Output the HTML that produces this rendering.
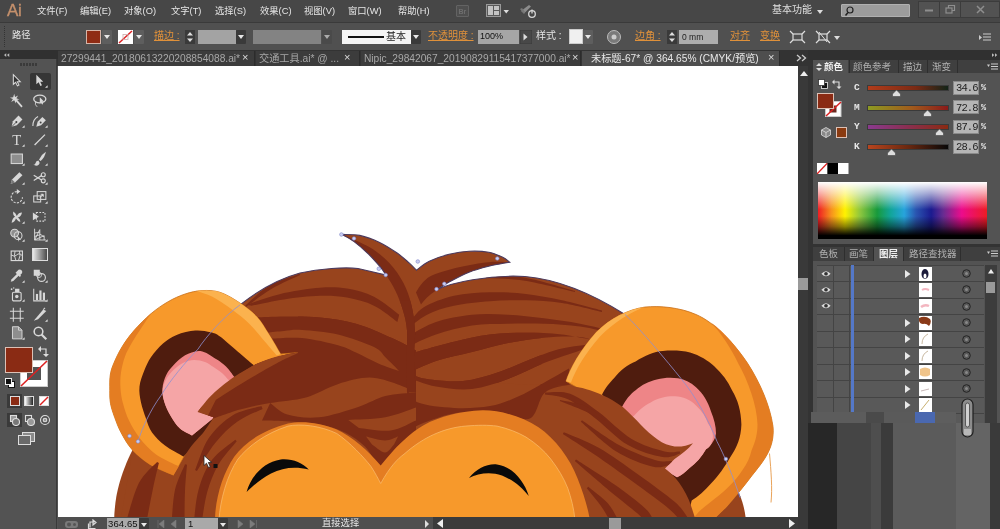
<!DOCTYPE html>
<html><head><meta charset="utf-8">
<style>
*{box-sizing:border-box;margin:0;padding:0}
html,body{width:1000px;height:529px;overflow:hidden;background:#535353}
body{position:relative;font-family:"Liberation Sans","Noto Sans CJK SC",sans-serif;font-size:11px;color:#dcdcdc}
.a{position:absolute}
#menubar,#ctrl,#tabs,#status,#rp,#tool{will-change:transform;backface-visibility:hidden}
.t{position:absolute;white-space:nowrap;line-height:1}
.o{color:#e0913a;text-decoration:underline}
#menubar{left:0;top:0;width:1000px;height:22px;background:#474747}
#ctrl{left:0;top:22px;width:1000px;height:28px;background:#505050;border-top:1px solid #3a3a3a}
#tabs{left:0;top:50px;width:1000px;height:16px;background:#333}
#tool{left:0;top:59px;width:57px;height:470px;background:#535353;border-right:1px solid #3a3a3a}
#canvas{left:58px;top:65.5px;width:739.500px;height:451.500px;background:#fff;overflow:hidden}
#status{left:58px;top:517px;width:740px;height:12px;background:#4f4f4f}
#vs{left:797.500px;top:66px;width:10.500px;height:463px;background:#393939}
#rp{left:808px;top:50px;width:192px;height:479px;background:#333}
.dd{position:absolute;width:10px;height:14px;background:#3a3a3a;border-radius:1px}
.dd:after{content:"";position:absolute;left:2px;top:5px;border:3px solid transparent;border-top:4px solid #e8e8e8}
.m{top:7px;font-size:9.3px;color:#e6e6e6}
.tb{top:1px;height:15px;background:#3c3c3c;border-right:1px solid #2c2c2c;color:#a8a8a8;font-size:10.2px;overflow:hidden}
.tb span{position:absolute;left:3px;top:2px;white-space:nowrap;line-height:12px}
.tb b{position:absolute;top:0;font-weight:normal;font-size:11px;line-height:13px;color:#ddd}
.tb.act{background:#4e4e4e;color:#e8e8e8}
</style></head><body>
<div id="menubar" class="a">
<div class="t" style="left:7px;top:2px;font-size:17px;font-weight:normal;color:#c5906c;letter-spacing:-.3px;-webkit-text-stroke:.35px #c5906c">Ai</div>
<div class="t m" style="left:37px">文件(F)</div><div class="t m" style="left:80px">编辑(E)</div><div class="t m" style="left:124px">对象(O)</div><div class="t m" style="left:171px">文字(T)</div><div class="t m" style="left:215px">选择(S)</div><div class="t m" style="left:260px">效果(C)</div><div class="t m" style="left:304px">视图(V)</div><div class="t m" style="left:348px">窗口(W)</div><div class="t m" style="left:398px">帮助(H)</div>
<div class="a" style="left:456px;top:5px;width:13px;height:12px;background:#4f4f4f;border:1px solid #636363;border-radius:1px"><div class="t" style="left:1.500px;top:2px;font-size:7px;color:#6e6e6e;font-weight:bold">Br</div></div>
<svg class="a" style="left:485px;top:3px" width="26" height="15"><rect x="1.500" y="1.500" width="14" height="12" fill="#5a5a5a" stroke="#9a9a9a" stroke-width="1"/><rect x="3" y="3" width="5" height="9" fill="#c4c4c4"/><rect x="9" y="3" width="5" height="4" fill="#c4c4c4"/><rect x="9" y="8" width="5" height="4" fill="#c4c4c4"/><path d="M18.500 7h5.500l-2.750 3.500z" fill="#ddd"/></svg>
<svg class="a" style="left:518px;top:3px" width="20" height="16"><path d="M3 8l8-6 2 1.500-7 7z" fill="#8c8c8c"/><path d="M2 6l2-1 3 4-1 2z" fill="#777"/><circle cx="14" cy="11" r="3.300" fill="none" stroke="#d8d8d8" stroke-width="1.300"/><path d="M14 6.500v4" stroke="#d8d8d8" stroke-width="1.300"/></svg>
<div class="t" style="left:772px;top:5px;font-size:10px;color:#e0e0e0">基本功能</div>
<svg class="a" style="left:816px;top:9px" width="8" height="6"><path d="M1 1h6L4 5z" fill="#ddd"/></svg>
<div class="a" style="left:841px;top:4px;width:69px;height:13px;background:#9c9c9c;border:1px solid #b0b0b0;border-radius:1px"></div>
<svg class="a" style="left:844px;top:5px" width="12" height="12"><circle cx="6" cy="5" r="3" fill="none" stroke="#222" stroke-width="1.2"/><path d="M4 7.5L1.5 10.5" stroke="#222" stroke-width="1.5"/></svg>
<svg class="a" style="left:918px;top:1px" width="82" height="17"><rect x=".5" y=".5" width="21" height="16" fill="#525252" stroke="#3c3c3c"/><rect x="21.500" y=".5" width="21" height="16" fill="#525252" stroke="#3c3c3c"/><rect x="42.500" y=".5" width="39" height="16" fill="#525252" stroke="#3c3c3c"/><path d="M7 9.500h8" stroke="#8e8e8e" stroke-width="2"/><rect x="28" y="7" width="6" height="5" fill="none" stroke="#8e8e8e" stroke-width="1.200"/><path d="M30.500 7V4.500h6v5h-2.500" fill="none" stroke="#8e8e8e" stroke-width="1.200"/><path d="M59 5l7 7M66 5l-7 7" stroke="#8e8e8e" stroke-width="1.500"/></svg>
</div>
<div id="ctrl" class="a">
<div class="a" style="left:4px;top:3px;width:2px;height:21px;border-left:1px dotted #333"></div>
<div class="t" style="left:12px;top:8px;font-size:9.3px;color:#e4e4e4">路径</div>
<div class="a" style="left:86px;top:7px;width:15px;height:14px;background:#8f2c14;border:1px solid #d6b5a8"></div><div class="dd" style="left:102px;top:7px;background:#5e5e5e"></div>
<svg class="a" style="left:118px;top:7px" width="15" height="14"><rect width="15" height="14" fill="#fff"/><path d="M1 13L14 1" stroke="#d22" stroke-width="1.5"/><rect x="5" y="4.5" width="5" height="5" fill="none" stroke="#caa" stroke-width=".8"/></svg><div class="dd" style="left:134px;top:7px;background:#5e5e5e"></div>
<div class="t o" style="left:154px;top:8px;font-size:10px">描边 :</div>
<svg class="a" style="left:185px;top:7px" width="10" height="14"><rect width="10" height="14" fill="#3a3a3a"/><path d="M2 5.5L5 2l3 3.5zM2 8.5L5 12l3-3.500z" fill="#ddd"/></svg>
<div class="a" style="left:198px;top:7px;width:38px;height:14px;background:#a3a3a3"></div><div class="dd" style="left:236px;top:7px"></div>
<div class="a" style="left:253px;top:7px;width:68px;height:14px;background:#838383"></div><div class="dd" style="left:322px;top:7px;background:#474747;opacity:.6"></div>
<div class="a" style="left:342px;top:7px;width:69px;height:14px;background:#f4f4f4"><div class="a" style="left:6px;top:6px;width:36px;height:2px;background:#111"></div><div class="t" style="left:44px;top:2px;font-size:10px;color:#222">基本</div></div><div class="dd" style="left:411px;top:7px"></div>
<div class="t o" style="left:428px;top:8px;font-size:10px">不透明度 :</div>
<div class="a" style="left:478px;top:7px;width:41px;height:14px;background:#a6a6a6"><div class="t" style="left:2px;top:2px;font-size:9px;color:#111">100%</div></div>
<svg class="a" style="left:520px;top:7px" width="12" height="14"><rect width="12" height="14" fill="#484848" stroke="#3a3a3a"/><path d="M3.500 3.500l4 3.500-4 3.500z" fill="#ddd"/></svg>
<div class="t" style="left:536px;top:8px;font-size:10px;color:#e4e4e4">样式 :</div>
<div class="a" style="left:569px;top:6px;width:14px;height:15px;background:#f0f0f0;border:1px solid #ccc"></div><div class="dd" style="left:583px;top:7px;background:#5e5e5e"></div>
<svg class="a" style="left:606px;top:6px" width="16" height="16"><circle cx="8" cy="8" r="6.500" fill="#7a7a7a" stroke="#bbb" stroke-width="1"/><circle cx="8" cy="8" r="2.500" fill="#ccc"/></svg>
<div class="t o" style="left:635px;top:8px;font-size:10px">边角 :</div>
<svg class="a" style="left:667px;top:7px" width="10" height="14"><rect width="10" height="14" fill="#3a3a3a"/><path d="M2 5.500L5 2l3 3.500zM2 8.500L5 12l3-3.500z" fill="#ddd"/></svg>
<div class="a" style="left:679px;top:7px;width:39px;height:14px;background:#adadad"><div class="t" style="left:3px;top:3px;font-size:8.500px;color:#222">0 mm</div></div>
<div class="t o" style="left:730px;top:8px;font-size:10px">对齐</div>
<div class="t o" style="left:760px;top:8px;font-size:10px">变换</div>
<svg class="a" style="left:789px;top:7px" width="18" height="14"><rect x="4" y="4" width="9" height="6" fill="none" stroke="#ddd" stroke-width="1.200"/><path d="M1 1l3 3M16 1l-3 3M1 13l3-3M16 13l-3-3" stroke="#ddd" stroke-width="1.200"/></svg>
<svg class="a" style="left:814px;top:7px" width="28" height="14"><rect x="5" y="4" width="8" height="6" fill="none" stroke="#ddd" stroke-width="1.200"/><path d="M2 1l3 3M16 1l-3 3M2 13l3-3M16 13l-3-3" stroke="#ddd" stroke-width="1.200"/><path d="M5 2l8 10" stroke="#ddd" stroke-width="1"/><path d="M20 6h6l-3 4z" fill="#ddd"/></svg>
<svg class="a" style="left:979px;top:10px" width="12" height="8"><path d="M4 1h8M4 4h8M4 7h8" stroke="#ccc" stroke-width="1"/><path d="M0 2l3 2.500L0 7z" fill="#ccc"/></svg>
</div>
<div id="tabs" class="a">
<div class="a" style="left:0;top:0;width:58px;height:9px;background:#303030"></div>
<svg class="a" style="left:3.500px;top:3px" width="6" height="4" viewBox="0 0 8 5"><path d="M3 0v5L0 2.500zM7 0v5L4 2.500z" fill="#bbb"/></svg>
<div class="a tb" style="left:58px;width:197px"><span>27299441_20180613220208854088.ai*</span><b style="left:184px">×</b></div>
<div class="a tb" style="left:256px;width:104px"><span>交通工具.ai* @ ...</span><b style="left:88px">×</b></div>
<div class="a tb" style="left:361px;width:220px"><span>Nipic_29842067_20190829115417377000.ai*</span><b style="left:211px">×</b></div>
<div class="a tb act" style="left:582px;width:198px"><span style="left:9px">未标题-67* @ 364.65% (CMYK/预览)</span><b style="left:186px">×</b></div>
<svg class="a" style="left:796px;top:4px" width="11" height="8"><path d="M1 1l3.500 3L1 7M6 1l3.500 3L6 7" fill="none" stroke="#ccc" stroke-width="1.300"/></svg>
</div>
<div id="tool" class="a">
<div class="a" style="left:20px;top:4px;width:17px;height:3px;background:repeating-linear-gradient(90deg,#3a3a3a 0 2px,transparent 2px 3px)"></div>
<div style="position:absolute;left:0;top:-59px;width:58px;height:470px"><svg class="a" style="left:9.2px;top:73.2px" width="15.600" height="15.600" viewBox="0 0 18 18"><path d="M5 2l8 8h-3.500l2 4-1.800.9-2-4.200L5 13z" fill="#333" stroke="#d8d8d8" stroke-width="1.200"/></svg><div class="a" style="left:30px;top:72.500px;width:21px;height:17.500px;background:#363636;border-radius:2px"></div><svg class="a" style="left:32.2px;top:73.2px" width="15.600" height="15.600" viewBox="0 0 18 18"><path d="M5 2l8 8h-3.500l2 4-1.800.9-2-4.200L5 13z" fill="#d8d8d8"/><path d="M15 17h3v-3z" fill="#ddd"/></svg><svg class="a" style="left:9.2px;top:93.2px" width="15.600" height="15.600" viewBox="0 0 18 18"><path d="M8 8l7 8" stroke="#d8d8d8" stroke-width="2"/><path d="M6 1l1 3.500L10.500 3 8.500 6 12 7.500 8.300 8 8 12 6 8.500 2.500 10.500 4.500 7 1 5.500 4.800 5z" fill="#d8d8d8"/></svg><svg class="a" style="left:32.2px;top:93.2px" width="15.600" height="15.600" viewBox="0 0 18 18"><ellipse cx="9" cy="7" rx="7" ry="4.500" fill="none" stroke="#d8d8d8" stroke-width="1.500"/><path d="M9 5l5 5-2.300.2 1.200 2.600-1.300.6-1.200-2.600L9 12.300z" fill="#d8d8d8"/><path d="M4 10q-1 4 2 6" stroke="#d8d8d8" fill="none"/></svg><svg class="a" style="left:9.2px;top:113.2px" width="15.600" height="15.600" viewBox="0 0 18 18"><path d="M3 16l1.500-6.500L11 3l4.500 4.500-6.500 6.500z" fill="#d8d8d8"/><path d="M3 16l5-5" stroke="#444" stroke-width="1"/><circle cx="8.500" cy="10.500" r="1.200" fill="#444"/><path d="M15 17h3v-3z" fill="#ddd"/></svg><svg class="a" style="left:32.2px;top:113.2px" width="15.600" height="15.600" viewBox="0 0 18 18"><path d="M5 16l1.500-6L12 4.500l4 4-5.500 5.500z" fill="#d8d8d8"/><circle cx="10" cy="11" r="1.100" fill="#444"/><path d="M1 15q0-8 6-11" stroke="#d8d8d8" fill="none" stroke-width="1.300"/><path d="M15 17h3v-3z" fill="#ddd"/></svg><svg class="a" style="left:9.2px;top:132.2px" width="15.600" height="15.600" viewBox="0 0 18 18"><text x="9" y="15" font-family="Liberation Serif,serif" font-size="17" text-anchor="middle" fill="#d8d8d8">T</text><path d="M15 17h3v-3z" fill="#ddd"/></svg><svg class="a" style="left:32.2px;top:132.2px" width="15.600" height="15.600" viewBox="0 0 18 18"><path d="M3 15L15 3" stroke="#d8d8d8" stroke-width="1.500"/><path d="M15 17h3v-3z" fill="#ddd"/></svg><svg class="a" style="left:9.2px;top:151.2px" width="15.600" height="15.600" viewBox="0 0 18 18"><rect x="2.500" y="3.500" width="13" height="11" fill="#8e8e8e" stroke="#d8d8d8" stroke-width="1.200"/><path d="M15 17h3v-3z" fill="#ddd"/></svg><svg class="a" style="left:32.2px;top:151.2px" width="15.600" height="15.600" viewBox="0 0 18 18"><path d="M16 1q-5 3-8 9l2 1.500q5-4 6-10.500z" fill="#d8d8d8"/><path d="M7.500 11q-3 0-3.500 3-.5 2-2.500 2 4 2 6.500-.5 1.500-2-.5-4.500z" fill="#d8d8d8"/><path d="M15 17h3v-3z" fill="#ddd"/></svg><svg class="a" style="left:9.2px;top:170.2px" width="15.600" height="15.600" viewBox="0 0 18 18"><path d="M2 16l1.500-5L12 2.500l3.500 3.500L7 14.500z" fill="#d8d8d8"/><path d="M2 16l1.500-5 3.500 3.500z" fill="#777"/><path d="M15 17h3v-3z" fill="#ddd"/></svg><svg class="a" style="left:32.2px;top:170.2px" width="15.600" height="15.600" viewBox="0 0 18 18"><circle cx="13" cy="5.500" r="2.300" fill="none" stroke="#d8d8d8" stroke-width="1.300"/><circle cx="13" cy="12.500" r="2.300" fill="none" stroke="#d8d8d8" stroke-width="1.300"/><path d="M11 6.500L2 12M11 11.500L2 6" stroke="#d8d8d8" stroke-width="1.400"/><path d="M15 17h3v-3z" fill="#ddd"/></svg><svg class="a" style="left:9.2px;top:189.2px" width="15.600" height="15.600" viewBox="0 0 18 18"><path d="M9 3a6.500 6.500 0 1 0 6.500 6.500" fill="none" stroke="#d8d8d8" stroke-width="1.300" stroke-dasharray="2.500 1.500"/><path d="M9 0l4 3-4 3z" fill="#d8d8d8"/><path d="M15 17h3v-3z" fill="#ddd"/></svg><svg class="a" style="left:32.2px;top:189.2px" width="15.600" height="15.600" viewBox="0 0 18 18"><rect x="2" y="8" width="8" height="7" fill="none" stroke="#d8d8d8" stroke-width="1.200"/><rect x="6" y="3" width="10" height="9" fill="none" stroke="#d8d8d8" stroke-width="1.200"/><path d="M9 10l4-4M13 6h-3M13 6v3" stroke="#d8d8d8" stroke-width="1.200" fill="none"/><path d="M15 17h3v-3z" fill="#ddd"/></svg><svg class="a" style="left:9.2px;top:209.2px" width="15.600" height="15.600" viewBox="0 0 18 18"><path d="M3 16q1-6 4-7-3-2-2-6 3 2 4 5 2-4 6-4-1 5-5 6 3 1 3 5-3-1-5-4-1 4-5 5z" fill="#d8d8d8"/><path d="M15 17h3v-3z" fill="#ddd"/></svg><svg class="a" style="left:32.2px;top:209.2px" width="15.600" height="15.600" viewBox="0 0 18 18"><rect x="5" y="4" width="10" height="10" fill="none" stroke="#d8d8d8" stroke-width="1.200" stroke-dasharray="2 1.500"/><path d="M1 4l7 5-7 4z" fill="#d8d8d8"/></svg><svg class="a" style="left:9.2px;top:227.2px" width="15.600" height="15.600" viewBox="0 0 18 18"><circle cx="6.500" cy="7" r="4.500" fill="#8e8e8e" stroke="#d8d8d8" stroke-width="1.200"/><circle cx="10.500" cy="10" r="4.500" fill="none" stroke="#d8d8d8" stroke-width="1.200"/><path d="M9 9l5 6-2.300-.2-.5 2.200z" fill="#d8d8d8"/><path d="M15 17h3v-3z" fill="#ddd"/></svg><svg class="a" style="left:32.2px;top:227.2px" width="15.600" height="15.600" viewBox="0 0 18 18"><path d="M3 2v13h13M3 15L9 3v12M3 15l11-5v5M3 11l6-2M3 7l6-1M9 8l5 3.500" stroke="#d8d8d8" stroke-width="1.100" fill="none"/><path d="M15 17h3v-3z" fill="#ddd"/></svg><svg class="a" style="left:9.2px;top:248.2px" width="15.600" height="15.600" viewBox="0 0 18 18"><rect x="2.500" y="3.500" width="13" height="11" fill="none" stroke="#d8d8d8" stroke-width="1.300"/><path d="M2.500 8q4 3 6.500 0t6.500 1M7 3.500q-2 5 1 11M12 3.500q2 5-1 11" stroke="#d8d8d8" fill="none" stroke-width="1.100"/></svg><svg class="a" style="left:32px;top:248px" width="16" height="14"><defs><linearGradient id="gg"><stop offset="0" stop-color="#eee"/><stop offset="1" stop-color="#444"/></linearGradient></defs><rect x=".5" y=".5" width="15" height="12" fill="url(#gg)" stroke="#ddd" stroke-width="1"/></svg><svg class="a" style="left:9.2px;top:268.2px" width="15.600" height="15.600" viewBox="0 0 18 18"><path d="M2 16l1-3 7-7 2 2-7 7z" fill="#d8d8d8"/><path d="M9 4l2-2q2-1 3.500.5T15 6l-2 2 1 1-1.500 1.500-5-5L9 4z" fill="#d8d8d8"/><path d="M15 17h3v-3z" fill="#ddd"/></svg><svg class="a" style="left:32.2px;top:268.2px" width="15.600" height="15.600" viewBox="0 0 18 18"><rect x="2" y="2" width="7" height="7" fill="#d8d8d8"/><circle cx="11" cy="11" r="4.500" fill="none" stroke="#d8d8d8" stroke-width="1.300"/><circle cx="8" cy="8" r="3" fill="none" stroke="#d8d8d8" stroke-width="1"/><path d="M15 17h3v-3z" fill="#ddd"/></svg><svg class="a" style="left:9.2px;top:287.2px" width="15.600" height="15.600" viewBox="0 0 18 18"><rect x="4" y="6" width="10" height="10" rx="1.500" fill="none" stroke="#d8d8d8" stroke-width="1.300"/><circle cx="9" cy="11" r="2" fill="#d8d8d8"/><rect x="7" y="2" width="5" height="4" fill="#d8d8d8"/><circle cx="3" cy="2.500" r="1" fill="#d8d8d8"/><circle cx="5.500" cy="1.200" r=".8" fill="#d8d8d8"/><path d="M15 17h3v-3z" fill="#ddd"/></svg><svg class="a" style="left:32.2px;top:287.2px" width="15.600" height="15.600" viewBox="0 0 18 18"><path d="M2 2v14h14" stroke="#d8d8d8" fill="none" stroke-width="1.200"/><rect x="4.500" y="8" width="2.500" height="7" fill="#d8d8d8"/><rect x="8.500" y="4" width="2.500" height="11" fill="#d8d8d8"/><rect x="12.500" y="6.500" width="2.500" height="8.500" fill="#d8d8d8"/><path d="M15 17h3v-3z" fill="#ddd"/></svg><svg class="a" style="left:9.2px;top:307.2px" width="15.600" height="15.600" viewBox="0 0 18 18"><path d="M5 1v16M13 1v16M1 5h16M1 13h16" stroke="#d8d8d8" stroke-width="1.200"/></svg><svg class="a" style="left:32.2px;top:307.2px" width="15.600" height="15.600" viewBox="0 0 18 18"><path d="M2 16L13 3l3.500 1.500L7 14z" fill="#d8d8d8"/><path d="M13 3l2-2" stroke="#d8d8d8" stroke-width="1.200"/><path d="M15 17h3v-3z" fill="#ddd"/></svg><svg class="a" style="left:9.2px;top:325.2px" width="15.600" height="15.600" viewBox="0 0 18 18"><path d="M4 2h7l4 4v10H4z" fill="#8e8e8e" stroke="#d8d8d8" stroke-width="1.100"/><path d="M11 2v4h4" fill="none" stroke="#d8d8d8" stroke-width="1"/><path d="M15 17h3v-3z" fill="#ddd"/></svg><svg class="a" style="left:32.2px;top:325.2px" width="15.600" height="15.600" viewBox="0 0 18 18"><circle cx="7.500" cy="7.500" r="5" fill="none" stroke="#d8d8d8" stroke-width="1.800"/><path d="M11 11l5.500 5.500" stroke="#d8d8d8" stroke-width="2.500"/></svg>
<div class="a" style="left:5px;top:347px;width:28px;height:26px;background:#8a2b14;border:1px solid #dcc1b6;z-index:2"></div>
<svg class="a" style="left:20px;top:360px" width="28" height="27"><rect x=".5" y=".5" width="27" height="26" fill="#fff" stroke="#ccc"/><rect x="7" y="7" width="14" height="13" fill="#535353"/><path d="M1 26L27 1" stroke="#d22" stroke-width="1.600"/></svg>
<svg class="a" style="left:38px;top:345px" width="12" height="12"><path d="M2 4h6v6" fill="none" stroke="#ddd" stroke-width="1.200"/><path d="M0 4l3-3v6zM8 12l-3-3h6z" fill="#ddd"/></svg>
<svg class="a" style="left:5px;top:378px" width="10" height="10"><rect x="3.500" y="3.500" width="6" height="6" fill="#fff" stroke="#111"/><rect x=".5" y=".5" width="6" height="6" fill="#111" stroke="#eee"/></svg>
<div class="a" style="left:7px;top:394px;width:15px;height:14px;background:#3a3a3a"></div>
<div class="a" style="left:10px;top:396px;width:10px;height:10px;background:#8a2b14;border:1px solid #ddd"></div>
<div class="a" style="left:24px;top:396px;width:10px;height:10px;background:linear-gradient(90deg,#fff,#222);border:1px solid #ddd"></div>
<svg class="a" style="left:39px;top:396px" width="10" height="10"><rect x=".5" y=".5" width="9" height="9" fill="#fff" stroke="#ddd"/><path d="M1 9L9 1" stroke="#d22" stroke-width="1.500"/></svg>
<div class="a" style="left:7px;top:413px;width:15px;height:14px;background:#3a3a3a"></div>
<svg class="a" style="left:9px;top:414px" width="42" height="12"><g fill="none" stroke="#ddd" stroke-width="1.100"><rect x="1.500" y="1.500" width="6" height="6" fill="#999"/><circle cx="7" cy="8" r="3.500" fill="#777"/><rect x="16.500" y="1.500" width="6" height="6"/><circle cx="22" cy="8" r="3.500" fill="#999"/><circle cx="36" cy="6" r="4.500"/><circle cx="36" cy="6" r="1.800" fill="#999"/></g></svg>
<svg class="a" style="left:18px;top:432px" width="18" height="14"><rect x="4.500" y=".5" width="12" height="9" fill="#8a8a8a" stroke="#ddd"/><rect x=".5" y="3.500" width="12" height="9" fill="#6a6a6a" stroke="#ddd"/></svg>
</div></div>
<div id="canvas" class="a">
<svg class="a" style="left:0;top:0" width="740" height="452" viewBox="58 65.5 740 452">
<!--LION-->
<defs><clipPath id="cd"><path d="M120 523L132.8 449.1L138 441C142 428 150 410 161 395C170 380 185 362 198 348.6C206 336 225 315 240 304.4C258 290 280 278 300 272.5C320 268 345 266.5 358 268L386.2 274.6C385.1 273.1 382.7 269.3 379.6 265.7C376.5 262.1 372 256.9 367.7 252.8C363.4 248.7 358.1 244.1 353.8 240.9C349.5 237.8 343.9 235.1 341.9 233.9C344.9 234.1 353.5 233.6 359.8 234.9C366.1 236.2 373.3 238.9 379.6 241.9C385.9 244.9 392.5 249.3 397.5 252.8C402.5 256.3 406.2 259.9 409.4 262.7C412.5 265.5 415.2 268.5 416.4 269.7C418.5 268.2 423.9 263.3 429.3 260.7C434.8 258.1 442.5 255.5 449.1 253.8C455.7 252.2 462.4 251.1 469 250.8C475.6 250.5 483.2 250.8 488.8 251.8C494.4 252.8 499.2 255.2 502.7 256.8C506.2 258.4 508.5 260.9 509.7 261.7C506.2 262.4 495.6 264 488.8 265.7C482 267.4 475.6 269 469 271.7C462.4 274.4 454.5 278.6 449.1 281.6C443.7 284.6 438.7 288.2 436.6 289.5C450 282 490 274 525 276C560 279 595 295 625 314C640 328 668 362 681 378C695 395 708 418 717 441C723 452 734 478 740 497L746 520Z"/></clipPath></defs>
<path fill="#98441D" d="M114 523C114.5 505 116 495 119.4 482.7C122 474 126 462 132.8 449.1L190 440L230 523Z"/>
<path fill="#98441D" d="M690 500L740 495C744 505 745 512 746 520L690 520Z"/>
<path fill="#98441D" d="M120 523L132.8 449.1L138 441C142 428 150 410 161 395C170 380 185 362 198 348.6C206 336 225 315 240 304.4C258 290 280 278 300 272.5C320 268 345 266.5 358 268L386.2 274.6C385.1 273.1 382.7 269.3 379.6 265.7C376.5 262.1 372 256.9 367.7 252.8C363.4 248.7 358.1 244.1 353.8 240.9C349.5 237.8 343.9 235.1 341.9 233.9C344.9 234.1 353.5 233.6 359.8 234.9C366.1 236.2 373.3 238.9 379.6 241.9C385.9 244.9 392.5 249.3 397.5 252.8C402.5 256.3 406.2 259.9 409.4 262.7C412.5 265.5 415.2 268.5 416.4 269.7C418.5 268.2 423.9 263.3 429.3 260.7C434.8 258.1 442.5 255.5 449.1 253.8C455.7 252.2 462.4 251.1 469 250.8C475.6 250.5 483.2 250.8 488.8 251.8C494.4 252.8 499.2 255.2 502.7 256.8C506.2 258.4 508.5 260.9 509.7 261.7C506.2 262.4 495.6 264 488.8 265.7C482 267.4 475.6 269 469 271.7C462.4 274.4 454.5 278.6 449.1 281.6C443.7 284.6 438.7 288.2 436.6 289.5C450 282 490 274 525 276C560 279 595 295 625 314C640 328 668 362 681 378C695 395 708 418 717 441C723 452 734 478 740 497L746 520Z"/>
<g clip-path="url(#cd)">
<path fill="#7B2B15" d="M246.2 304.3C252.5 302.4 271.7 295.5 284 292.6C296.3 289.8 309.5 287.9 320 287.2C330.5 286.4 338 286.6 347 288.1C356 289.6 365.3 291.9 374 296.2C382.7 300.5 395 311.2 399.2 314.2L397.4 321.4C393.5 318.7 382.4 309.2 374 305.2C365.6 301.1 356 298.8 347 297.1C338 295.5 330.5 295 320 295.3C309.5 295.6 295.4 297.2 284 298.9C272.6 300.5 257 304.1 251.6 305.2Z"/>
<path fill="#7B2B15" d="M299.8 273.5C294.7 275.5 278.5 279.6 269 285.3C259.5 291 247.1 303.9 242.7 307.6L243.3 308.4C247.9 305.1 261.5 294.4 271 288.7C280.5 283.1 295.3 276.8 300.2 274.5Z"/>
<path fill="#7B2B15" d="M409 323.2C411.4 320.5 415.9 311.6 423.4 307C430.9 302.4 442.9 297.9 454 295.3C465.1 292.8 478 292 490 291.7C502 291.4 514 292.1 526 293.5C538 294.9 549.3 297.1 562 299.8C574.7 302.6 595.3 308.3 602 310L602 311.5C595.3 310 574.7 304.4 562 302.5C549.3 300.6 538 300.1 526 299.8C514 299.5 502 299.8 490 300.7C478 301.6 464.5 302.9 454 305.2C443.5 307.4 434.8 310.3 427 314.2C419.2 318.1 410.5 326.2 407.2 328.6Z"/>
<path fill="#7B2B15" d="M410.8 334C415 331.9 425.8 324.7 436 321.4C446.2 318.1 460 315.4 472 314.2C484 313 496 313.6 508 314.2C520 314.8 532 316.3 544 317.8C556 319.3 568.3 321 580 323.2C591.7 325.4 608.3 329.7 614 331L614 333C608.3 331.8 591.7 327.5 580 325.9C568.3 324.3 556 323.6 544 323.2C532 322.8 520 322.9 508 323.2C496 323.5 484 323.2 472 325C460 326.8 446.8 330.4 436 334C425.2 337.6 412 344.5 407.2 346.6Z"/>
<path fill="#7B2B15" d="M470 277.5C478.3 277.8 502.3 277.2 519.8 279.5C537.3 281.8 565.7 289.5 574.9 291.5L575.1 290.5C566 288.2 537.7 278.8 520.2 276.5C502.7 274.2 478.4 276.5 470 276.5Z"/>
<path fill="#7B2B15" d="M257 316.9C261.5 316.8 273.5 316 284 316C294.5 316 308 315.7 320 316.9C332 318.1 344 319.8 356 323.2C368 326.6 382 333.1 392 337.6C402 342.1 412 347.9 416 350L416 392C412.9 390.6 405 386.2 397.2 383.7C389.4 381.2 379.3 377.1 369.4 377.1C359.5 377.1 348.3 380.4 337.7 383.7C327.1 387 317.1 393.8 305.9 396.9C294.6 400 281.2 400.5 270.2 402.5C259.2 404.5 250.9 405.9 240 409C229.1 412.1 210.8 419 205 421Z"/>
<path fill="#98441D" d="M268 332C270.7 331.7 278.3 330.8 284 330.4C289.7 330 293 328.9 302 329.5C311 330.1 326 331.1 338 334C350 336.9 366 342.7 374 346.6C382 350.5 381.7 353.3 385.9 357.3C390.1 361.3 396.9 368.3 399.1 370.5L399.1 370.5C395.6 369.2 385.5 366 378.3 362.9C371.1 359.8 362.7 355 356 352C349.3 349 347 347.2 338 344.8C329 342.4 313 338.7 302 337.6C291 336.5 277 337.9 272 338Z"/>
<path fill="#7B2B15" d="M414 352C420.7 350.2 441.3 344.2 454 341.2C466.7 338.2 478 335.5 490 334C502 332.5 514 332.2 526 332.2C538 332.2 548.8 332.4 562 334C575.2 335.6 597.8 340.7 605 342L605 343.5C600.8 342.3 590.2 337.6 580 336.5C569.8 335.4 556 336.2 544 337.2C532 338.2 520 340.2 508 342.6C496 345 484 348.6 472 351.6C460 354.6 446.8 357 436 360.6C425.2 364.2 412 370.9 407.2 373Z"/>
<path fill="#7B2B15" d="M407.2 372.3C410.5 373.4 417.7 377.2 427 378.6C436.3 380 451 381.6 463 380.4C475 379.2 487 375.3 499 371.4C511 367.5 524.5 360.9 535 357C545.5 353.1 552.5 350.2 562 348C571.5 345.8 587 344.2 592 343.5L592 346C590 346.7 588 347.2 580 350C572 352.8 556 357.9 544 362.6C532 367.4 520 374.2 508 378.5C496 382.8 484 387.2 472 388.5C460 389.8 446.8 387.9 436 386C425.2 384.1 412 378.5 407.2 377Z"/>
<path fill="#7B2B15" d="M407.2 389C409 391.2 410.2 398.9 418 402C425.8 405.1 442 406.8 454 407.4C466 408 479.5 407.4 490 405.6C500.5 403.8 508 400.5 517 396.6C526 392.7 535.3 387 544 382.2C552.7 377.4 564.8 370.4 569 368L570 384C565.8 385.3 551.7 386.3 545 392C538.3 397.7 537.5 414.7 530 418C522.5 421.3 511.7 413 500 412C488.3 411 471.7 410.7 460 412C448.3 413.3 438.8 417 430 420C421.2 423 410.8 428.3 407 430Z"/>
<path fill="#7B2B15" d="M341.9 233.9C346.5 236.1 361.8 242 369.7 246.8C377.6 251.6 384 256.7 389.6 262.7C395.2 268.7 399.9 275.7 403.5 282.6C407.1 289.6 409.5 296.5 411.4 304.4C413.3 312.3 414.6 320.7 415 330C415.4 339.3 413.8 349.7 414 360C414.2 370.3 415.7 386.7 416 392L407 392C406.9 386.7 406.5 370.3 406.5 360C406.5 349.7 407.6 338.3 407 330C406.4 321.7 404.9 316.6 403 310C401.1 303.4 398.3 296.4 395.5 290.5C392.7 284.6 388.8 278.7 386.2 274.6C383.6 270.5 382.7 269.3 379.6 265.7C376.5 262.1 372 256.9 367.7 252.8C363.4 248.7 358.1 244.1 353.8 240.9C349.5 237.8 343.9 235.1 341.9 233.9Z"/>
<path fill="#7B2B15" d="M416 292C417 290.5 419.2 285.9 422 283C424.8 280.1 426.8 277.3 433 274.6C439.2 271.9 449.7 268.9 459 266.7C468.3 264.5 480.4 262.5 488.8 261.7C497.2 260.9 506.2 261.7 509.7 261.7L509.7 261.7C506.2 262.4 495.6 264 488.8 265.7C482 267.4 475.6 269 469 271.7C462.4 274.4 454.5 278.6 449.1 281.6C443.7 284.6 440.3 286.9 436.6 289.5C432.9 292.1 429.6 294.6 427 297C424.4 299.4 422 302.8 421 304Z"/>
</g>
<path fill="none" stroke="#4b3a5e" stroke-width="1.1" d="M138 441C142 428 150 410 161 395C170 380 185 362 198 348.6C206 336 225 315 240 304.4C258 290 280 278 300 272.5C320 268 345 266.5 358 268L386.2 274.6C385.1 273.1 382.7 269.3 379.6 265.7C376.5 262.1 372 256.9 367.7 252.8C363.4 248.7 358.1 244.1 353.8 240.9C349.5 237.8 343.9 235.1 341.9 233.9C344.9 234.1 353.5 233.6 359.8 234.9C366.1 236.2 373.3 238.9 379.6 241.9C385.9 244.9 392.5 249.3 397.5 252.8C402.5 256.3 406.2 259.9 409.4 262.7C412.5 265.5 415.2 268.5 416.4 269.7C418.5 268.2 423.9 263.3 429.3 260.7C434.8 258.1 442.5 255.5 449.1 253.8C455.7 252.2 462.4 251.1 469 250.8C475.6 250.5 483.2 250.8 488.8 251.8C494.4 252.8 499.2 255.2 502.7 256.8C506.2 258.4 508.5 260.9 509.7 261.7C506.2 262.4 495.6 264 488.8 265.7C482 267.4 475.6 269 469 271.7C462.4 274.4 454.5 278.6 449.1 281.6C443.7 284.6 438.7 288.2 436.6 289.5C450 282 490 274 525 276C560 279 595 295 625 314C640 328 668 362 681 378C695 395 708 418 717 441C723 452 734 478 740 497"/>
<path fill="#F7992B" stroke="#c8701c" stroke-width=".8" d="M173.7 474.8C169.8 473 156.9 468.3 150 464C143.1 459.7 136.8 454.3 132 449C127.2 443.7 123.9 437.3 121 432C118.1 426.7 116.5 421.8 114.7 417C113 412.2 111.3 407.5 110.5 403C109.7 398.5 109.8 394.7 109.8 390C109.8 385.3 109.6 379.4 110.2 375C110.8 370.6 111.6 368.1 113.6 363.3C115.6 358.5 118.7 351.8 122.1 346.3C125.5 340.8 129.2 335.6 134 330.1C138.8 324.6 145.4 317.9 151.1 313.1C156.8 308.3 162.4 304.5 168.1 301.2C173.8 297.9 179.4 295.4 185.1 293.5C190.8 291.6 196.3 290.4 202.1 290.1C207.9 289.8 213.8 289.8 220 291.8C226.2 293.8 233.5 298.2 239.6 302.3C245.7 306.4 252 311 256.8 316.2C261.7 321.4 264.7 327.2 268.7 333.4C272.7 339.6 278.6 350.1 280.6 353.5L300 352L215 420L184 456Z"/>
<path fill="#E47D22" d="M173.7 474.8C169.8 473 156.9 468.3 150 464C143.1 459.7 136.8 454.3 132 449C127.2 443.7 123.9 437.3 121 432C118.1 426.7 116.5 421.8 114.7 417C113 412.2 111.3 407.5 110.5 403C109.7 398.5 109.8 394.7 109.8 390C109.8 385.3 109.6 379.4 110.2 375C110.8 370.6 111.6 368.1 113.6 363.3C115.6 358.5 118.7 351.8 122.1 346.3C125.5 340.8 129.2 335.6 134 330.1C138.8 324.6 148.2 315.9 151.1 313.1L151.1 313.1C149.4 315.6 144.2 323.2 141 328C137.8 332.8 134.7 337.3 132 342C129.3 346.7 126.8 351 125 356C123.2 361 121.8 366.7 121 372C120.2 377.3 120.2 382.8 120.5 388C120.8 393.2 121.6 397.7 123 403C124.4 408.3 126.2 414.2 129 420C131.8 425.8 135.5 432.3 140 438C144.5 443.7 149.5 449.3 156 454C162.5 458.7 175.2 464 179 466Z"/>
<path fill="#FBB24E" d="M196 290.5C197 290.4 198.1 289.9 202.1 290.1C206.1 290.3 213.8 289.8 220 291.8C226.2 293.8 233.5 298.2 239.6 302.3C245.7 306.4 252 311 256.8 316.2C261.7 321.4 264.7 327.2 268.7 333.4C272.7 339.6 278.6 350.1 280.6 353.5L276.8 355C274.5 352.3 267.6 344.3 263 339C258.4 333.7 254.2 328 249 323C243.8 318 238.2 313.5 232 309C225.8 304.5 218 299.1 212 296C206 292.9 198.7 291.4 196 290.5Z"/>
<path fill="#4F1C0E" d="M183.5 456C180.4 454.2 170.2 449 165 445C159.8 441 155.2 436.5 152 432C148.8 427.5 147.8 423 146 418C144.2 413 142.1 407.3 141 402C139.9 396.7 138.9 391.3 139.5 386C140.1 380.7 142.4 375 144.3 370.1C146.2 365.2 148 361 151.1 356.5C154.2 352 158.8 346.6 163 342.9C167.2 339.2 171.2 336.5 176.6 334.4C182 332.3 189.6 330.5 195.3 330.1C201 329.7 206.5 330.8 210.6 331.8C214.7 332.8 215.5 332.8 220 336C224.5 339.2 232 346.2 237.6 351C243.2 355.8 250.9 362.3 253.6 364.6L230 400L200 440Z"/>
<path fill="#EE8587" d="M192 435C190 433.8 183.5 431.2 180 428C176.5 424.8 173.6 420.3 171 416C168.4 411.7 165.9 406.7 164.5 402C163.1 397.3 162.2 392.5 162.5 388C162.8 383.5 164.2 378.8 166 375C167.8 371.2 170 368.4 173.2 365C176.4 361.6 180.6 357.2 185.1 354.8C189.6 352.4 195.2 349.9 200.4 350.5C205.6 351.1 211.7 355.9 216 358.5C220.3 361.1 223 363.1 226 366C229 368.9 232.7 374.3 234 376L240 385L200 412L214 417Z"/>
<path fill="#F5A5A6" d="M192 435C190 433.8 183.5 431.2 180 428C176.5 424.8 173.6 420.3 171 416C168.4 411.7 165.9 406.3 164.5 402C163.1 397.7 162.2 393.8 162.5 390C162.8 386.2 164.1 382.5 166 379C167.9 375.5 171 371.8 174 369C177 366.2 180.7 363.6 184 362C187.3 360.4 190.5 359.6 194 359.5C197.5 359.4 201.8 360.3 205 361.5C208.2 362.7 210.7 364.7 213.5 366.5C216.3 368.3 219.6 370.4 222 372.5C224.4 374.6 227 377.9 228 379L240 385L200 412L214 417Z"/>
<path fill="#F7992B" stroke="#c8701c" stroke-width=".8" d="M566 380.7C570 368 580 350 596 332C610 318 628 309 644.6 306.6C660 305 680 307 696 314C715 322 735 344 747.4 362.5C760 382 770 405 773 426C775 448 763 461 752 475C743 487 733 499 727.6 505.2C722 511 716 516 710 523L690 523L660 470L600 400Z"/>
<path fill="#E47D22" d="M711 322C725 332 738 348 747.4 362.5C760 382 770 405 773 426C775 448 763 461 752 475C743 487 733 499 727.6 505.2C722 511 716 516 710 523L690 523C696 513 703 507 709.7 502.2C716 497 722 493 727.6 487.3C734 481 739 475 742.5 469.4C747 463 750 457 751.5 450C756 440 757.5 432 757.5 424C757 405 748 380 738 362.5C731 348 722 334 711 322Z"/>
<path fill="#FBB24E" d="M566 380.7C570 368 580 350 596 332C610 318 628 309 644.6 306.6C632 311 614 322 600 336C586 352 576 368 571 382Z"/>
<path fill="#4F1C0E" d="M602 394C606 386 610 382 614 377.7C620 370 628 364 635.6 361C645 355 654 351 662.8 350.5C672 349.5 682 350 690 352C700 355 708 360 714 365.6C722 373 728 381 732 389.8C738 400 741 410 741.4 424C741 437 737 447 730.7 456C725 466 718 476 711 483C705 490 698 496 691.7 500L686 523L650 450Z"/>
<path fill="#EE8587" d="M622 406.4C626 399 630 394 635.6 389.8C642 384 649 381 656.7 379C664 377 671 376.8 678 377.7C685 379 691 382 696 386.7C703 393 708 401 711 411C714 418 716 426 716 433C715 440 711 445 706 448.8C702 456 696 463 689 468C685 472 681 475 677 476.8L665 469.5L640 430Z"/>
<path fill="#F5A5A6" d="M630 420C638 410 644 405 650.7 401.9C659 397 667 395.5 675 395.8C683 396 690 399 696 404.9C702 410 706 417 708 423C713 430 714 436 712 441C711 445 709 447 706 448.8C702 456 696 463 689 468C685 472 681 475 677 476.8L665 469.5L640 430Z"/>
<defs><clipPath id="cf"><path d="M173.7 474.8L184.4 456.4C190 446 198 438 203 432.6C208 425 212 420 213.5 416.7L197.6 411.4C210 396 240 372 255.8 363.8C270 358 285 353.5 298 351.9L298 300L542 300L542 384.5C565 384 580 386 590 389.8C603 394 614 400 623.4 407C630 413 636 419 640.5 424C646 430 652 435 657.6 439C663 443 669 445 674.6 446C681 446.5 688 445 693 442.7C688 449 681 454 674.6 458.5L665 468C669 471 672 474 675.4 477.6C681 484 685 491 688.8 499.3C691 505 693 511 694.8 517L696 523L170 523Z"/></clipPath></defs>
<path fill="#98441D" d="M173.7 474.8L184.4 456.4C190 446 198 438 203 432.6C208 425 212 420 213.5 416.7L197.6 411.4C210 396 240 372 255.8 363.8C270 358 285 353.5 298 351.9L420 380L542 384.5C565 384 580 386 590 389.8C603 394 614 400 623.4 407C630 413 636 419 640.5 424C646 430 652 435 657.6 439C663 443 669 445 674.6 446C681 446.5 688 445 693 442.7C688 449 681 454 674.6 458.5L665 468C669 471 672 474 675.4 477.6C681 484 685 491 688.8 499.3C691 505 693 511 694.8 517L696 523L170 523Z"/>
<g clip-path="url(#cf)">
<path fill="#7B2B15" d="M257 316.9C261.5 316.8 273.5 316 284 316C294.5 316 308 315.7 320 316.9C332 318.1 344 319.8 356 323.2C368 326.6 382 333.1 392 337.6C402 342.1 412 347.9 416 350L416 392C412.9 390.6 405 386.2 397.2 383.7C389.4 381.2 379.3 377.1 369.4 377.1C359.5 377.1 348.3 380.4 337.7 383.7C327.1 387 317.1 393.8 305.9 396.9C294.6 400 281.2 400.5 270.2 402.5C259.2 404.5 250.9 405.9 240 409C229.1 412.1 210.8 419 205 421Z"/>
<path fill="#98441D" d="M268 332C270.7 331.7 278.3 330.8 284 330.4C289.7 330 293 328.9 302 329.5C311 330.1 326 331.1 338 334C350 336.9 366 342.7 374 346.6C382 350.5 381.7 353.3 385.9 357.3C390.1 361.3 396.9 368.3 399.1 370.5L399.1 370.5C395.6 369.2 385.5 366 378.3 362.9C371.1 359.8 362.7 355 356 352C349.3 349 347 347.2 338 344.8C329 342.4 313 338.7 302 337.6C291 336.5 277 337.9 272 338Z"/>
<path fill="#7B2B15" d="M414 352C420.7 350.2 441.3 344.2 454 341.2C466.7 338.2 478 335.5 490 334C502 332.5 514 332.2 526 332.2C538 332.2 548.8 332.4 562 334C575.2 335.6 597.8 340.7 605 342L605 343.5C600.8 342.3 590.2 337.6 580 336.5C569.8 335.4 556 336.2 544 337.2C532 338.2 520 340.2 508 342.6C496 345 484 348.6 472 351.6C460 354.6 446.8 357 436 360.6C425.2 364.2 412 370.9 407.2 373Z"/>
<path fill="#7B2B15" d="M407.2 372.3C410.5 373.4 417.7 377.2 427 378.6C436.3 380 451 381.6 463 380.4C475 379.2 487 375.3 499 371.4C511 367.5 524.5 360.9 535 357C545.5 353.1 552.5 350.2 562 348C571.5 345.8 587 344.2 592 343.5L592 346C590 346.7 588 347.2 580 350C572 352.8 556 357.9 544 362.6C532 367.4 520 374.2 508 378.5C496 382.8 484 387.2 472 388.5C460 389.8 446.8 387.9 436 386C425.2 384.1 412 378.5 407.2 377Z"/>
<path fill="#7B2B15" d="M407.2 389C409 391.2 410.2 398.9 418 402C425.8 405.1 442 406.8 454 407.4C466 408 479.5 407.4 490 405.6C500.5 403.8 508 400.5 517 396.6C526 392.7 535.3 387 544 382.2C552.7 377.4 564.8 370.4 569 368L570 384C565.8 385.3 551.7 386.3 545 392C538.3 397.7 537.5 414.7 530 418C522.5 421.3 511.7 413 500 412C488.3 411 471.7 410.7 460 412C448.3 413.3 438.8 417 430 420C421.2 423 410.8 428.3 407 430Z"/>
<path fill="#7B2B15" d="M341.9 233.9C346.5 236.1 361.8 242 369.7 246.8C377.6 251.6 384 256.7 389.6 262.7C395.2 268.7 399.9 275.7 403.5 282.6C407.1 289.6 409.5 296.5 411.4 304.4C413.3 312.3 414.6 320.7 415 330C415.4 339.3 413.8 349.7 414 360C414.2 370.3 415.7 386.7 416 392L407 392C406.9 386.7 406.5 370.3 406.5 360C406.5 349.7 407.6 338.3 407 330C406.4 321.7 404.9 316.6 403 310C401.1 303.4 398.3 296.4 395.5 290.5C392.7 284.6 388.8 278.7 386.2 274.6C383.6 270.5 382.7 269.3 379.6 265.7C376.5 262.1 372 256.9 367.7 252.8C363.4 248.7 358.1 244.1 353.8 240.9C349.5 237.8 343.9 235.1 341.9 233.9Z"/>
<path fill="#7B2B15" d="M270.2 402.5C273.1 404.4 279.2 411.7 287.4 414.1C295.5 416.5 307.2 418.1 319.1 416.8C331 415.5 347.9 409.7 358.9 406.2C369.9 402.7 375.8 398 385.3 395.6C394.8 393.2 410.9 392.6 416 392L416 430C412.5 433 400.8 442 395 448C389.2 454 386 466.3 381 466C376 465.7 371 451.7 365 446C359 440.3 352.5 435.7 345 432C337.5 428.3 329.2 425.8 320 424C310.8 422.2 299.7 421.7 290 421C280.3 420.3 266.7 420.2 262 420Z"/>
<path fill="#98441D" d="M348.3 419.4C354.5 419 374 418.9 385.3 416.8C396.6 414.7 410.9 408.6 416 407L416 420C411.8 421.7 400.1 428.8 390.6 430C381.1 431.2 364.2 427.8 358.9 427.4Z"/>
<path fill="#98441D" d="M366 436C369.2 436.7 379.7 440 385 440C390.3 440 395.8 436.7 398 436L394 444C392.5 445.3 388.7 452 385 452C381.3 452 374.2 445.3 372 444Z"/>
<path fill="#7B2B15" d="M261.4 405.6C256.7 407.1 241.6 409.3 232.8 414.7C224 420 215.1 428.5 208.8 437.6C202.5 446.7 197.4 464.2 195.1 469.5L196.9 470.5C199.9 465.8 208.5 450.6 215.2 442.4C221.9 434.2 229.3 427 237.2 421.3C245.1 415.7 258.3 410.5 262.6 408.4Z"/>
<path fill="#7B2B15" d="M235.3 439.3C231.3 442.7 217.8 451.6 211.7 459.8C205.6 468 201.6 478.8 198.7 488.7C195.7 498.7 194.8 514.2 194.1 519.3L201.9 520.7C202.8 515.8 204.6 500.7 207.3 491.3C210.1 481.9 213.4 472.6 218.3 464.2C223.2 455.8 233.7 444.6 236.7 440.7Z"/>
<path fill="#7B2B15" d="M185 463.8C183.4 468 177.3 479.5 175 489.3C172.8 499.1 172.1 517.1 171.5 522.6L184.5 523.4C184.6 517.9 184.5 500.5 185 490.7C185.4 480.8 186.6 468.6 187 464.2Z"/>
<path fill="#7B2B15" d="M544.9 394C548.7 394.8 559.6 394.9 567.9 398.8C576.1 402.6 584.5 409.6 594.5 417.2C604.5 424.8 616.7 438 628 444.6C639.3 451.2 653.7 455.2 662.4 456.6C671.1 458 677.1 453.6 680.1 453L679.9 451C677.2 451 671.7 452.8 663.6 450.8C655.6 448.7 642.4 445.1 631.6 438.6C620.8 432.1 608.9 419.2 598.7 411.6C588.5 404 579.1 396.5 570.1 393.2C561.2 390 549.3 392.2 545.1 392Z"/>
<path fill="#7B2B15" d="M580.8 421.3C586.7 426.2 603.9 443.2 615.9 450.7C628 458.2 643.8 464.1 653.1 466.2C662.5 468.3 668.9 463.9 672.1 463.5L671.9 460.5C669.1 460.3 663.6 462.1 654.9 459.4C646.1 456.8 631.6 451.3 619.5 444.7C607.3 438.1 588.2 423.9 582 419.7Z"/>
<path fill="#7B2B15" d="M562.8 433.5C568.1 436.9 582.7 446.1 594.5 454.1C606.2 462.1 620.8 472.5 633.3 481.6C645.7 490.6 661 501.6 669.1 508.4C677.2 515.3 679.8 520.3 682 522.6L688 517.4C685.8 514.7 683.2 508.8 674.9 501.6C666.7 494.4 651.2 483.3 638.5 474.2C625.8 465.2 611.2 454.4 598.7 447.3C586.3 440.2 569.6 434.3 563.8 431.7Z"/>
<path fill="#7B2B15" d="M574.8 460.6C580.5 465.5 598.6 481.2 609.3 490.2C620 499.1 632.7 508.6 639 514.3C645.2 520 645.5 522.7 646.8 524.4L653.2 519.6C651.9 517.7 651.6 513.6 645 507.7C638.5 501.7 625.6 491.9 614.1 483.8C602.6 475.7 582.4 463.1 576 459Z"/>
<path fill="#7B2B15" d="M586.8 487.7C589.4 490.9 598.1 501.1 602.2 507.2C606.4 513.2 610 521.2 611.6 524L618.4 520C616.7 517.1 612.8 508.4 607.8 502.8C602.7 497.2 591.5 489.1 588.2 486.3Z"/>
<path fill="#7B2B15" d="M559.8 400.5C563.9 402.1 576.5 407 584 410.3C591.5 413.6 601.3 418.7 604.7 420.4L605.3 419.6C602.1 417.3 593.5 409.1 586 405.7C578.5 402.4 564.5 400.6 560.2 399.5Z"/>
</g>
<path fill="#98441D" d="M197.6 411.4C199.8 408.8 205.5 400.8 210.8 395.5C216.1 390.2 221.9 385 229.4 379.7C236.9 374.4 247.9 367.8 255.8 363.8C263.7 359.8 270 357.9 277 355.9C284 353.9 294.5 352.6 298 351.9L298 352.5C295.7 353.6 288.8 356.6 284 359C279.2 361.4 275.9 363.1 269 367C262.1 370.9 251 377.4 242.6 382.5C234.2 387.6 225.4 393.1 218.8 397.4C212.2 401.6 205.6 406.2 203 408Z"/>
<path fill="#7B2B15" d="M157.1 461.5C154.1 465 144.1 472.6 138.9 482.5C133.8 492.3 128.4 514.1 126.3 520.5L145.7 525.5C146.9 519.2 150.9 498.1 153.1 487.5C155.3 477 157.9 466.6 158.9 462.5Z"/>
<path fill="#E47D22" d="M215 520C215 500 222 474 234.4 456C245 442 262 430 288 423C300 420.5 318 421 336.8 429C352 436 368 450 380.7 465C395 447 410 432 424 424.4C440 416 460 410.5 482.4 409.8C500 409.5 522 416 538.5 426.8C555 438 570 458 577.6 478C584 494 588 508 590 520Z"/>
<path fill="#F7992B" stroke="#F9B767" stroke-width=".8" d="M219 520C220 500 227 475 238 458.5C248 446 265 433 288 425.6C300 423 320 425 336.8 433C350 442 364 457 371 466C375 472 378 478 380.7 483C390 466 398 458 404 453.7C415 444 425 438 433.7 434C445 429 455 426.5 465.4 425.6C478 424.5 488 424.5 497 425.6C508 428 518 432 526 436.6C536 443 544 450 550.7 458.5C558 468 564 478 567.8 487.8C571 497 574 508 575 520Z"/>
<path fill="#0a0a0a" d="M246.6 491.5C250 478 262 462 280.7 459C292 458 302 462 308.8 469C295 466 283 467 271 473C260 479 252 486 246.6 491.5Z"/>
<path fill="#0a0a0a" d="M469 477.6C477 468 487 463 497 464C512 466 524 480 528.8 495.6C522 487 514 480 502 475C490 471 478 473 469 477.6Z"/>
<g fill="none" stroke="#8f8fd0" stroke-width=".8">
<path d="M240 304.4C225 315 206 336 198 348.6C185 362 170 380 161 395C150 410 142 428 138 441"/>
<path d="M625 314C640 328 668 362 681 378C695 395 708 418 717 441C723 452 734 478 740 497"/>
</g>
<circle cx="354" cy="238" r="1.8" fill="#c9cdf2" stroke="#7d84c8" stroke-width=".6"/>
<circle cx="378.8" cy="268.3" r="1.8" fill="#c9cdf2" stroke="#7d84c8" stroke-width=".6"/>
<circle cx="417.8" cy="261" r="1.8" fill="#c9cdf2" stroke="#7d84c8" stroke-width=".6"/>
<circle cx="497.3" cy="258" r="1.8" fill="#c9cdf2" stroke="#7d84c8" stroke-width=".6"/>
<circle cx="444.3" cy="283.3" r="1.8" fill="#c9cdf2" stroke="#7d84c8" stroke-width=".6"/>
<circle cx="436.5" cy="288.6" r="1.8" fill="#c9cdf2" stroke="#7d84c8" stroke-width=".6"/>
<circle cx="385.7" cy="274.5" r="1.8" fill="#c9cdf2" stroke="#7d84c8" stroke-width=".6"/>
<circle cx="129.5" cy="435.5" r="1.8" fill="#c9cdf2" stroke="#7d84c8" stroke-width=".6"/>
<circle cx="138" cy="441" r="1.8" fill="#c9cdf2" stroke="#7d84c8" stroke-width=".6"/>
<circle cx="725.9" cy="458.5" r="1.8" fill="#c9cdf2" stroke="#7d84c8" stroke-width=".6"/>
<circle cx="341.4" cy="234" r="1.8" fill="#c9cdf2" stroke="#7d84c8" stroke-width=".6"/>
<path d="M769.5 453C771 470 772.5 488 771 502" fill="none" stroke="#e9a35a" stroke-width="1"/>
<path d="M204 455l0 10 2.5-2.3 2 4.3 1.8-.8-2-4.2 3.3-.2z" fill="#fff" stroke="#222" stroke-width=".8"/><rect x="213.5" y="463.5" width="4" height="4" fill="#111"/>
<!--/LION-->
</svg>
</div>
<div id="status" class="a">
<svg class="a" style="left:6px;top:2px" width="36" height="10"><rect x="1" y="2" width="13" height="7" rx="3" fill="#7a7a7a"/><circle cx="5" cy="5.500" r="2" fill="#555"/><circle cx="10.500" cy="5.500" r="1.500" fill="#555"/><path d="M26 8.500V3h5M29 1l3 2.500-3 2.500z" fill="none" stroke="#ddd" stroke-width="1.200"/><path d="M24.500 4.500v5h7" fill="none" stroke="#ddd" stroke-width="1.200"/></svg>
<div class="a" style="left:49px;top:1px;width:32px;height:12px;background:#a9a9a9"><div class="t" style="left:1px;top:1px;font-size:9.500px;color:#111;letter-spacing:.1px">364.65</div></div>
<div class="dd" style="left:81px;top:1px;height:12px"></div>
<svg class="a" style="left:98px;top:3px" width="24" height="8"><path d="M2 0v8M8 0v8L3 4zM20 0v8l-5-4z" fill="#7c7c7c" stroke="#7c7c7c" stroke-width=".5"/></svg>
<div class="a" style="left:127px;top:1px;width:33px;height:12px;background:#a9a9a9"><div class="t" style="left:3px;top:1px;font-size:9.500px;color:#111">1</div></div>
<div class="dd" style="left:160px;top:1px;height:12px"></div>
<svg class="a" style="left:179px;top:3px" width="24" height="8"><path d="M1 0v8l5-4zM13 0v8l5-4zM19.500 0v8" fill="#7c7c7c" stroke="#7c7c7c" stroke-width=".5"/></svg>
<div class="t" style="left:264px;top:2px;font-size:9.300px;color:#e6e6e6">直接选择</div>
<svg class="a" style="left:366px;top:3px" width="6" height="8"><path d="M1 0v8l4-4z" fill="#ddd"/></svg>
<div class="a" style="left:375px;top:0;width:365px;height:13px;background:#3b3b3b"></div>
<svg class="a" style="left:378px;top:2px" width="8" height="9"><path d="M7 0v9L1 4.500z" fill="#eee"/></svg>
<div class="a" style="left:551px;top:1px;width:12px;height:12px;background:#9a9a9a"></div>
<svg class="a" style="left:730px;top:2px" width="8" height="9"><path d="M1 0v9l6-4.500z" fill="#eee"/></svg>
</div>
<div id="vs" class="a"><svg class="a" style="left:2px;top:5px" width="8" height="5"><path d="M0 5h8L4 0z" fill="#eee"/></svg><div class="a" style="left:0;top:212px;width:10px;height:12px;background:#9a9a9a"></div></div>
<div id="rp" class="a"><div class="a" style="left:0;top:0;width:192px;height:10px;background:#303030"></div><svg class="a" style="left:184px;top:3px" width="6" height="4" viewBox="0 0 8 5"><path d="M0 0v5l3-2.500zM4 0v5l3-2.500z" fill="#bbb"/></svg><div class="a" style="left:5px;top:10px;width:187px;height:183.500px;background:#535353"></div><div class="a" style="left:5px;top:10px;width:187px;height:13px;background:#3f3f3f"></div><div class="a" style="left:5px;top:10px;width:35px;height:14px;background:#535353"></div><svg class="a" style="left:8px;top:12px" width="6" height="10"><path d="M0 4l3-3 3 3zM0 6l3 3 3-3z" fill="#ddd"/></svg><div class="t" style="left:16px;top:12px;font-size:9.500px;color:#f0f0f0;font-weight:bold">颜色</div><div class="t" style="left:45px;top:12px;font-size:9.500px;color:#b0b0b0">颜色参考</div><div class="t" style="left:95px;top:12px;font-size:9.500px;color:#b0b0b0">描边</div><div class="t" style="left:124px;top:12px;font-size:9.500px;color:#b0b0b0">渐变</div><div class="a" style="left:41px;top:10px;width:1px;height:13px;background:#2e2e2e"></div><div class="a" style="left:90px;top:10px;width:1px;height:13px;background:#2e2e2e"></div><div class="a" style="left:119px;top:10px;width:1px;height:13px;background:#2e2e2e"></div><div class="a" style="left:149px;top:10px;width:1px;height:13px;background:#2e2e2e"></div><svg class="a" style="left:179px;top:13px" width="11" height="8"><path d="M4 1h7M4 3.500h7M4 6h7" stroke="#ccc" stroke-width="1"/><path d="M0 1.500h3L1.500 4z" fill="#ccc"/></svg><svg class="a" style="left:10px;top:29px" width="10" height="10"><rect x="3.500" y="3.500" width="6" height="6" fill="#111" stroke="#eee" stroke-width=".8"/><rect x=".5" y=".5" width="6" height="6" fill="#fff" stroke="#333" stroke-width=".8"/></svg><svg class="a" style="left:24px;top:29px" width="11" height="10"><path d="M2 3h5v5" fill="none" stroke="#ddd" stroke-width="1.100"/><path d="M0 3l2.500-2.500v5zM7 10l-2.500-2.500h5z" fill="#ddd"/></svg><svg class="a" style="left:17px;top:51px" width="17" height="16"><rect x=".5" y=".5" width="15.500" height="15" fill="#fff" stroke="#ccc"/><rect x="4.500" y="4.500" width="7" height="7" fill="#6a2a20"/><path d="M1 15L16 1" stroke="#d22" stroke-width="1.500"/></svg><div class="a" style="left:9px;top:43px;width:17px;height:16px;background:#8a2b14;border:1px solid #dcc1b6"></div><svg class="a" style="left:13px;top:77px" width="10" height="11"><path d="M5 .5l4.500 2.500v5L5 10.500.5 8V3z" fill="#888" stroke="#ddd" stroke-width=".8"/><path d="M.5 3L5 5.500 9.500 3M5 5.500v5" stroke="#ddd" stroke-width=".8" fill="none"/></svg><div class="a" style="left:28px;top:77px;width:11px;height:11px;background:#8a3a10;border:1px solid #dcc1b6"></div><div class="t" style="left:46px;top:33.0px;font-size:9.500px;color:#e8e8e8;font-family:'Liberation Mono',monospace;font-weight:bold">C</div><div class="a" style="left:59px;top:35.0px;width:82px;height:6px;background:linear-gradient(90deg,#b23c1a,#7a2a14 60%,#122418);border:1px solid #3a3a3a"></div><svg class="a" style="left:83.5px;top:40.0px" width="9" height="7"><path d="M4.500 0L8.500 4v2.500h-8V4z" fill="#ddd" stroke="#444" stroke-width=".6"/></svg><div class="a" style="left:145px;top:30.5px;width:26px;height:14px;background:#b5b5b5;border:1px solid #8a8a8a;overflow:hidden"><div class="t" style="left:2px;top:1.500px;font-size:10.500px;color:#222;font-family:'Liberation Mono',monospace;letter-spacing:-.9px">34.68</div></div><div class="t" style="left:173px;top:34.0px;font-size:8.500px;color:#e8e8e8;font-family:'Liberation Mono',monospace;font-weight:bold">%</div><div class="t" style="left:46px;top:52.7px;font-size:9.500px;color:#e8e8e8;font-family:'Liberation Mono',monospace;font-weight:bold">M</div><div class="a" style="left:59px;top:54.7px;width:82px;height:6px;background:linear-gradient(90deg,#8c9a22,#a05a1c 55%,#8a1a1a);border:1px solid #3a3a3a"></div><svg class="a" style="left:115.0px;top:59.7px" width="9" height="7"><path d="M4.500 0L8.500 4v2.500h-8V4z" fill="#ddd" stroke="#444" stroke-width=".6"/></svg><div class="a" style="left:145px;top:50.2px;width:26px;height:14px;background:#b5b5b5;border:1px solid #8a8a8a;overflow:hidden"><div class="t" style="left:2px;top:1.500px;font-size:10.500px;color:#222;font-family:'Liberation Mono',monospace;letter-spacing:-.9px">72.88</div></div><div class="t" style="left:173px;top:53.7px;font-size:8.500px;color:#e8e8e8;font-family:'Liberation Mono',monospace;font-weight:bold">%</div><div class="t" style="left:46px;top:72.4px;font-size:9.500px;color:#e8e8e8;font-family:'Liberation Mono',monospace;font-weight:bold">Y</div><div class="a" style="left:59px;top:74.4px;width:82px;height:6px;background:linear-gradient(90deg,#8a3a8e,#8a2f50 50%,#8a2a12);border:1px solid #3a3a3a"></div><svg class="a" style="left:127.0px;top:79.4px" width="9" height="7"><path d="M4.500 0L8.500 4v2.500h-8V4z" fill="#ddd" stroke="#444" stroke-width=".6"/></svg><div class="a" style="left:145px;top:69.9px;width:26px;height:14px;background:#b5b5b5;border:1px solid #8a8a8a;overflow:hidden"><div class="t" style="left:2px;top:1.500px;font-size:10.500px;color:#222;font-family:'Liberation Mono',monospace;letter-spacing:-.9px">87.93</div></div><div class="t" style="left:173px;top:73.4px;font-size:8.500px;color:#e8e8e8;font-family:'Liberation Mono',monospace;font-weight:bold">%</div><div class="t" style="left:46px;top:92.1px;font-size:9.500px;color:#e8e8e8;font-family:'Liberation Mono',monospace;font-weight:bold">K</div><div class="a" style="left:59px;top:94.1px;width:82px;height:6px;background:linear-gradient(90deg,#b8451e,#6a2810 50%,#080808);border:1px solid #3a3a3a"></div><svg class="a" style="left:79.0px;top:99.1px" width="9" height="7"><path d="M4.500 0L8.500 4v2.500h-8V4z" fill="#ddd" stroke="#444" stroke-width=".6"/></svg><div class="a" style="left:145px;top:89.6px;width:26px;height:14px;background:#b5b5b5;border:1px solid #8a8a8a;overflow:hidden"><div class="t" style="left:2px;top:1.500px;font-size:10.500px;color:#222;font-family:'Liberation Mono',monospace;letter-spacing:-.9px">28.6</div></div><div class="t" style="left:173px;top:93.1px;font-size:8.500px;color:#e8e8e8;font-family:'Liberation Mono',monospace;font-weight:bold">%</div><svg class="a" style="left:9px;top:113px" width="32" height="11"><rect width="10.500" height="11" fill="#fff"/><path d="M0 11L10.500 0" stroke="#d22" stroke-width="1.300"/><rect x="10.500" width="10.500" height="11" fill="#000"/><rect x="21" width="10.500" height="11" fill="#fff"/></svg><div class="a" style="left:10px;top:132px;width:169px;height:57px;background:linear-gradient(180deg,#fff 0,rgba(255,255,255,.6) 20%,rgba(255,255,255,0) 48%,rgba(0,0,0,0) 60%,rgba(0,0,0,.45) 78%,#000 94%),linear-gradient(90deg,#ee1c24 0,#f7941d 8%,#fff200 16%,#8dc63f 25%,#189a3c 35%,#12a59a 43%,#27a4dc 51%,#2a55b0 58%,#1b1b8f 67%,#662d91 74%,#ec0c8c 85%,#ee1c24 100%)"></div><div class="a" style="left:5px;top:196.5px;width:187px;height:282.5px;background:#535353"></div><div class="a" style="left:5px;top:196.5px;width:187px;height:14px;background:#3f3f3f"></div><div class="a" style="left:66px;top:196.5px;width:29px;height:15px;background:#535353"></div><div class="t" style="left:11px;top:199.0px;font-size:9.500px;color:#b0b0b0">色板</div><div class="t" style="left:41px;top:199.0px;font-size:9.500px;color:#b0b0b0">画笔</div><div class="t" style="left:71px;top:199.0px;font-size:9.500px;color:#f0f0f0;font-weight:bold">图层</div><div class="t" style="left:101px;top:199.0px;font-size:9.500px;color:#b0b0b0">路径查找器</div><div class="a" style="left:36px;top:196.5px;width:1px;height:14px;background:#2e2e2e"></div><div class="a" style="left:65px;top:196.5px;width:1px;height:14px;background:#2e2e2e"></div><div class="a" style="left:95px;top:196.5px;width:1px;height:14px;background:#2e2e2e"></div><div class="a" style="left:152px;top:196.5px;width:1px;height:14px;background:#2e2e2e"></div><svg class="a" style="left:179px;top:199.5px" width="11" height="8"><path d="M4 1h7M4 3.500h7M4 6h7" stroke="#ccc" stroke-width="1"/><path d="M0 1.500h3L1.500 4z" fill="#ccc"/></svg><div class="a" style="left:9px;top:215.0px;width:167px;height:16.45px;background:#595959;border-top:1px solid #444"></div><svg class="a" style="left:12.500px;top:219.5px" width="10" height="7.500" viewBox="0 0 13 9"><path d="M.5 4.500Q6.500-2 12.500 4.500 6.500 11 .5 4.500z" fill="#ddd"/><circle cx="6.500" cy="4.500" r="2.400" fill="#333"/></svg><svg class="a" style="left:97px;top:219.5px" width="6" height="8"><path d="M0 0v8l5.500-4z" fill="#e8e8e8"/></svg><svg class="a" style="left:111px;top:216.5px" width="13" height="14"><rect width="13" height="14" fill="#fff"/><ellipse cx="6" cy="7" rx="3.5" ry="5" fill="#1a1a3a"/><ellipse cx="6" cy="9" rx="1.5" ry="2.5" fill="#fff"/></svg><svg class="a" style="left:153px;top:218.0px" width="11" height="11"><circle cx="5.500" cy="5.500" r="3.800" fill="none" stroke="#222" stroke-width="1"/><circle cx="5.500" cy="5.500" r="1.500" fill="#888"/></svg><div class="a" style="left:9px;top:231.4px;width:167px;height:16.45px;background:#595959;border-top:1px solid #444"></div><svg class="a" style="left:12.500px;top:235.9px" width="10" height="7.500" viewBox="0 0 13 9"><path d="M.5 4.500Q6.500-2 12.500 4.500 6.500 11 .5 4.500z" fill="#ddd"/><circle cx="6.500" cy="4.500" r="2.400" fill="#333"/></svg><svg class="a" style="left:111px;top:232.9px" width="13" height="14"><rect width="13" height="14" fill="#fff"/><path d="M3 7q3-2 7 0" stroke="#f3b6c0" stroke-width="2" fill="none"/></svg><svg class="a" style="left:153px;top:234.4px" width="11" height="11"><circle cx="5.500" cy="5.500" r="3.800" fill="none" stroke="#222" stroke-width="1"/><circle cx="5.500" cy="5.500" r="1.500" fill="#888"/></svg><div class="a" style="left:9px;top:247.9px;width:167px;height:16.45px;background:#595959;border-top:1px solid #444"></div><svg class="a" style="left:12.500px;top:252.4px" width="10" height="7.500" viewBox="0 0 13 9"><path d="M.5 4.500Q6.500-2 12.500 4.500 6.500 11 .5 4.500z" fill="#ddd"/><circle cx="6.500" cy="4.500" r="2.400" fill="#333"/></svg><svg class="a" style="left:111px;top:249.4px" width="13" height="14"><rect width="13" height="14" fill="#fff"/><path d="M2 8q4-3 8-1" stroke="#f3b6c0" stroke-width="2.5" fill="none"/></svg><svg class="a" style="left:153px;top:250.9px" width="11" height="11"><circle cx="5.500" cy="5.500" r="3.800" fill="none" stroke="#222" stroke-width="1"/><circle cx="5.500" cy="5.500" r="1.500" fill="#888"/></svg><div class="a" style="left:9px;top:264.4px;width:167px;height:16.45px;background:#595959;border-top:1px solid #444"></div><svg class="a" style="left:97px;top:268.9px" width="6" height="8"><path d="M0 0v8l5.500-4z" fill="#e8e8e8"/></svg><svg class="a" style="left:111px;top:265.9px" width="13" height="14"><rect width="13" height="14" fill="#fff"/><path d="M0 2q6-3 11 1 2 3-1 7-3-3-6-2-3 0-4-3z" fill="#8a3a18"/></svg><svg class="a" style="left:153px;top:267.4px" width="11" height="11"><circle cx="5.500" cy="5.500" r="3.800" fill="none" stroke="#222" stroke-width="1"/><circle cx="5.500" cy="5.500" r="1.500" fill="#888"/></svg><div class="a" style="left:9px;top:280.8px;width:167px;height:16.45px;background:#595959;border-top:1px solid #444"></div><svg class="a" style="left:97px;top:285.3px" width="6" height="8"><path d="M0 0v8l5.500-4z" fill="#e8e8e8"/></svg><svg class="a" style="left:111px;top:282.3px" width="13" height="14"><rect width="13" height="14" fill="#fff"/><path d="M3 12q0-7 6-10" stroke="#c8b8a0" fill="none"/></svg><svg class="a" style="left:153px;top:283.8px" width="11" height="11"><circle cx="5.500" cy="5.500" r="3.800" fill="none" stroke="#222" stroke-width="1"/><circle cx="5.500" cy="5.500" r="1.500" fill="#888"/></svg><div class="a" style="left:9px;top:297.2px;width:167px;height:16.45px;background:#595959;border-top:1px solid #444"></div><svg class="a" style="left:97px;top:301.8px" width="6" height="8"><path d="M0 0v8l5.500-4z" fill="#e8e8e8"/></svg><svg class="a" style="left:111px;top:298.8px" width="13" height="14"><rect width="13" height="14" fill="#fff"/><path d="M3 12q0-7 6-10" stroke="#c8b8a0" fill="none"/></svg><svg class="a" style="left:153px;top:300.2px" width="11" height="11"><circle cx="5.500" cy="5.500" r="3.800" fill="none" stroke="#222" stroke-width="1"/><circle cx="5.500" cy="5.500" r="1.500" fill="#888"/></svg><div class="a" style="left:9px;top:313.7px;width:167px;height:16.45px;background:#595959;border-top:1px solid #444"></div><svg class="a" style="left:97px;top:318.2px" width="6" height="8"><path d="M0 0v8l5.500-4z" fill="#e8e8e8"/></svg><svg class="a" style="left:111px;top:315.2px" width="13" height="14"><rect width="13" height="14" fill="#fff"/><path d="M1 4q5-3 10 0v6q-5 3-10 0z" fill="#f0c48a"/></svg><svg class="a" style="left:153px;top:316.7px" width="11" height="11"><circle cx="5.500" cy="5.500" r="3.800" fill="none" stroke="#222" stroke-width="1"/><circle cx="5.500" cy="5.500" r="1.500" fill="#888"/></svg><div class="a" style="left:9px;top:330.1px;width:167px;height:16.45px;background:#595959;border-top:1px solid #444"></div><svg class="a" style="left:97px;top:334.6px" width="6" height="8"><path d="M0 0v8l5.500-4z" fill="#e8e8e8"/></svg><svg class="a" style="left:111px;top:331.6px" width="13" height="14"><rect width="13" height="14" fill="#fff"/><path d="M2 9q4-1 8-2" stroke="#c8b8b8" fill="none"/></svg><svg class="a" style="left:153px;top:333.1px" width="11" height="11"><circle cx="5.500" cy="5.500" r="3.800" fill="none" stroke="#222" stroke-width="1"/><circle cx="5.500" cy="5.500" r="1.500" fill="#888"/></svg><div class="a" style="left:9px;top:346.6px;width:167px;height:16.45px;background:#595959;border-top:1px solid #444"></div><svg class="a" style="left:97px;top:351.1px" width="6" height="8"><path d="M0 0v8l5.500-4z" fill="#e8e8e8"/></svg><svg class="a" style="left:111px;top:348.1px" width="13" height="14"><rect width="13" height="14" fill="#fff"/><path d="M2 12L10 2" stroke="#c8b070" fill="none"/></svg><svg class="a" style="left:153px;top:349.6px" width="11" height="11"><circle cx="5.500" cy="5.500" r="3.800" fill="none" stroke="#222" stroke-width="1"/><circle cx="5.500" cy="5.500" r="1.500" fill="#888"/></svg><div class="a" style="left:9px;top:363.0px;width:167px;height:16.45px;background:#595959;border-top:1px solid #444"></div><svg class="a" style="left:111px;top:364.5px" width="13" height="14"><rect width="13" height="14" fill="#fff"/></svg><svg class="a" style="left:153px;top:366.0px" width="11" height="11"><circle cx="5.500" cy="5.500" r="3.800" fill="none" stroke="#222" stroke-width="1"/><circle cx="5.500" cy="5.500" r="1.500" fill="#888"/></svg><div class="a" style="left:25px;top:215px;width:1px;height:264px;background:#444"></div><div class="a" style="left:41px;top:215px;width:1px;height:264px;background:#444"></div><div class="a" style="left:42.500px;top:215px;width:3.500px;height:264px;background:#5478c8"></div><div class="a" style="left:177px;top:215px;width:12px;height:264px;background:#3c3c3c"></div><svg class="a" style="left:180px;top:219px" width="6" height="5"><path d="M0 4.500h6L3 0z" fill="#eee"/></svg><div class="a" style="left:178px;top:232px;width:9px;height:11px;background:#9a9a9a"></div><div class="a" style="left:0px;top:373px;width:29px;height:106px;background:#272727"></div><div class="a" style="left:29px;top:373px;width:34px;height:106px;background:#454545"></div><div class="a" style="left:63px;top:373px;width:10px;height:106px;background:#4e4e4e"></div><div class="a" style="left:73px;top:373px;width:12px;height:106px;background:#3b3b3b"></div><div class="a" style="left:85px;top:373px;width:63px;height:106px;background:#5b5b5b"></div><div class="a" style="left:148px;top:373px;width:34px;height:106px;background:#646464"></div><div class="a" style="left:182px;top:373px;width:10px;height:106px;background:#3a3a3a"></div><div class="a" style="left:3px;top:362px;width:55px;height:11px;background:#5c5c5c"></div><div class="a" style="left:58px;top:362px;width:18px;height:11px;background:#4a4a4a"></div><div class="a" style="left:76px;top:362px;width:31px;height:11px;background:#5a5a5a"></div><div class="a" style="left:107px;top:362px;width:20px;height:11px;background:#4a68b0"></div><div class="a" style="left:127px;top:362px;width:21px;height:11px;background:#5e5e5e"></div><svg class="a" style="left:152px;top:348px" width="16" height="42"><rect x="2" y="1" width="11" height="38" rx="5.500" fill="#8c8c8c" stroke="#1e1e1e" stroke-width="1.200"/><rect x="5.500" y="5" width="4" height="24" rx="2" fill="#d0d0d0" stroke="#333" stroke-width=".7"/><rect x="4" y="31" width="7" height="6" fill="#b8b8b8"/></svg></div>
</body></html>
